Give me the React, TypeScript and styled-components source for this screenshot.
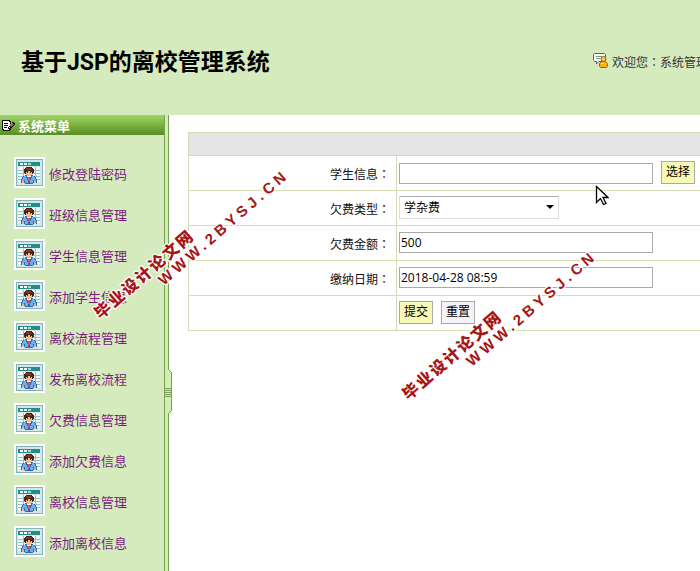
import React from "react";
import styled, { createGlobalStyle } from "styled-components";

const GlobalStyle = createGlobalStyle`
  * { box-sizing: border-box; }
  body {
    margin: 0;
    background: #fff;
    color: #111;
    font: 12px/16px "Open Sans", "Noto Sans CJK SC", sans-serif;
    overflow: hidden;
  }
`;

const Page = styled.div`
  position: relative;
  display: flex;
  flex-direction: column;
  min-height: 100vh;
  overflow: hidden;
`;

const Header = styled.header`
  display: flex;
  align-items: center;
  justify-content: space-between;
  height: 115px;
  padding-left: 21px;
  padding-top: 10px;
  background: #d5ebbd;
  white-space: nowrap;
`;

const Title = styled.h1`
  margin: 0;
  color: #000;
  font: bold 23px/32px Roboto, "Noto Sans CJK SC", sans-serif;
`;

const Welcome = styled.div`
  display: flex;
  align-items: center;
  gap: 4px;
  width: 107px;
  color: #333;
  svg { flex: none; margin-bottom: 4px; }
`;

const Body = styled.div`
  display: flex;
  flex: 1;
`;

const Sidebar = styled.aside`
  flex: none;
  width: 164px;
  background: #d5ebbd;
`;

const MenuTitle = styled.h2`
  display: flex;
  align-items: center;
  gap: 3px;
  height: 20px;
  margin: 0;
  padding-left: 2px;
  background: linear-gradient(#a3d567, #7db544 45%, #5a8d26);
  color: #fff;
  font: bold 13px/20px "Noto Sans CJK SC", sans-serif;
  span { padding-top: 1px; }
`;

const Menu = styled.ul`
  display: flex;
  flex-direction: column;
  gap: 10px;
  margin: 0;
  padding: 22px 0 0 14px;
  list-style: none;
`;

const MenuLink = styled.a`
  display: flex;
  align-items: center;
  gap: 4px;
  height: 31px;
  color: #7b1b7d;
  font: 13px/18px "Noto Sans CJK SC", sans-serif;
  text-decoration: none;
  white-space: nowrap;
  svg { flex: none; }
  span { padding-top: 3px; }
`;

const Splitter = styled.div`
  position: relative;
  flex: none;
  width: 5px;
  border: solid #7a9f58;
  border-width: 0 1px;
  background: #d1f0b0;
`;

const Handle = styled.button`
  position: absolute;
  top: 254px;
  left: 0;
  width: 8px;
  height: 46px;
  padding: 0;
  border: 0;
  background: none;
  svg { display: block; }
`;

const Content = styled.main`
  flex: 1;
  min-width: 0;
  padding: 17px 0 0 19px;
`;

const FormTable = styled.table`
  width: 100%;
  table-layout: fixed;
  border-collapse: collapse;
  border: 1px solid #d5dcb4;
  border-right: 0;
  tr { height: 35px; }
  th, td { padding: 0; border-bottom: 1px solid #d5dcb4; }
`;

const Caption = styled.th`
  height: 23px;
  background: #e5e5e5;
`;

const CaptionRow = styled.tr`
  && { height: 23px; }
`;

const LabelCell = styled.th`
  && { padding: 2px 6px 0 0; border-right: 1px solid #d5dcb4; }
  text-align: right;
  font-weight: normal;
`;

const Colon = styled.span`
  font-family: "Noto Sans CJK TC", sans-serif;
`;

const Fields = styled.div`
  display: flex;
  align-items: flex-end;
  gap: 8px;
  padding: 0 0 2px 2px;
`;

const TextInput = styled.input`
  width: 254px;
  height: 21px;
  padding: 0 1px;
  border: 1px solid #a9a9a9;
  border-radius: 0;
  background: #fff;
  color: #000;
  font: inherit;
`;

const SelectWrap = styled.div`
  display: grid;
  align-items: center;
  width: 160px;
  svg { grid-area: 1 / 1; justify-self: end; margin-right: 5px; pointer-events: none; }
`;

const Select = styled.select`
  grid-area: 1 / 1;
  width: 100%;
  height: 23px;
  padding: 2px 4px 0;
  appearance: none;
  border: 1px solid #dedee2;
  border-top-color: #abadb3;
  border-radius: 1px;
  background: #fff;
  color: #000;
  font: inherit;
`;

const Button = styled.button<{ $plain?: boolean }>`
  width: 34px;
  height: 23px;
  padding: 0;
  border: 1px solid #a9a9a9;
  background: ${(p) => (p.$plain ? "#f7f1fa" : "#f7f9b4")};
  color: #000;
  font: inherit;
  white-space: nowrap;
`;

const Watermark = styled.div<{ $x: number; $y: number }>`
  position: absolute;
  left: ${(p) => p.$x}px;
  top: ${(p) => p.$y}px;
  display: flex;
  flex-direction: column;
  width: 220px;
  transform: rotate(-41deg);
  transform-origin: 0 0;
  color: #a81515;
  font: bold 16px/16px "Liberation Sans", "Noto Sans CJK SC", sans-serif;
  white-space: nowrap;
  pointer-events: none;
  text-shadow: 1px 0 #fff, -1px 0 #fff, 0 1px #fff, 0 -1px #fff, 1px 1px #fff, -1px -1px #fff, 1px -1px #fff, -1px 1px #fff, 0 0 2px #fff;
`;

const MarkName = styled.span`
  font-weight: 900;
  letter-spacing: 2px;
`;

const MarkSite = styled.span`
  padding-left: 70px;
  font-size: 15px;
  letter-spacing: 4px;
`;

const Pointer = styled.svg`
  position: absolute;
  left: 595px;
  top: 185px;
`;

const UserIcon = () => (
  <svg width="31" height="31" viewBox="0 0 31 31" shapeRendering="crispEdges" aria-hidden="true">
    <path fill="#fff" d="M0 0h31v31H0z" />
    <path fill="#86b4b6" d="M2 2h27v27H2z" />
    <path fill="#d3e8e8" d="M3 3h25v25H3z" />
    <path fill="#268b8b" d="M4 5h22v4H4z" />
    <path fill="#fff" d="M6 6h3v2H6zM10 6h3v2h-3z" />
    <path fill="#a8dcdc" d="M14 6h3v2h-3z" />
    <path fill="#f2fbfb" d="M4 10h22v15H4z" />
    <path fill="#9dc0c2" d="M4 13h22v1H4zM4 16h22v1H4zM4 19h22v1H4zM4 22h22v1H4zM9 10h1v15H9zM21 10h1v15h-1z" />
    <path fill="#4b2419" d="M12 10h6v1h1v1h1v4h-1v1h-8v-1h-1v-4h1v-1h1z" />
    <path fill="#7a3b1c" d="M12 11h5v1h1v1h-6z" />
    <path fill="#f3bf8c" d="M12 15h2v-1h2v1h2v3h-1v1h-4v-1h-1z" />
    <path fill="#5b3527" d="M13 15h1v1h-1zM16 15h1v1h-1z" />
    <path fill="#2f66ac" d="M11 18h2v1h4v-1h2v1h2v1h1v2h1v4h-4v1h-8v-1H7v-4h1v-2h1v-1h2z" />
    <path fill="#6bb0f2" d="M10 19h2v2h1v2h1v3h-3v-3h-1v2H8v-3h1v-2h1zM18 19h2v1h1v2h1v3h-2v-2h-1v3h-3v-3h1v-2h1z" />
    <path fill="#fff" d="M13 19h4v1h-1v2h-2v-2h-1z" />
    <path fill="#df5546" d="M14 20h2v4h-2z" />
    <path fill="#f6b777" d="M8 24h2v2H8zM20 24h2v2h-2z" />
  </svg>
);

const EditIcon = () => (
  <svg width="13" height="13" viewBox="0 0 13 13" shapeRendering="crispEdges" aria-hidden="true">
    <path fill="#111" d="M0 1h8v1h1v3H8v3h1v3H8v1H1v-1H0z" />
    <path fill="#fff" d="M1 2h6v1h1v7H7v1H2v-1H1z" />
    <path fill="#111" d="M2 4h4v1H2zM2 6h4v1H2zM2 8h3v1H2z" />
    <path fill="#111" d="M10 3h2v1h1v2h-1v1h-1v1h-1v1H9v1H6V8h1V7h1V6h1V5h1z" />
    <path fill="#bd5534" d="M10 4h1v1h1v1h-1v1h-1v1H9V7H8V6h1V5h1z" />
    <path fill="#f4d699" d="M7 8h1v1H7z" />
  </svg>
);

const ChatIcon = () => (
  <svg width="15" height="15" viewBox="0 0 15 15" fill="none" aria-hidden="true">
    <path fill="#f8faf7" stroke="#5d6561" d="M1.500.5h10l1 1v6l-1 1H6L3.500 11V8.500h-2l-1-1v-6z" />
    <path stroke="#8b918d" d="M3 3.500h6M3 5.500h4" />
    <circle cx="10.500" cy="6" r="2.500" fill="#f7c84a" stroke="#9c6500" />
    <path fill="#f6ae19" stroke="#a76600" d="M6.500 13.500v-3l2-2h4l2 2v3l-1 1h-6z" />
    <path stroke="#ffe27a" d="M8 10.500h3" />
  </svg>
);

const menu = [
  "修改登陆密码",
  "班级信息管理",
  "学生信息管理",
  "添加学生信息",
  "离校流程管理",
  "发布离校流程",
  "欠费信息管理",
  "添加欠费信息",
  "离校信息管理",
  "添加离校信息",
];

const Mark = ({ x, y }: { x: number; y: number }) => (
  <Watermark $x={x} $y={y}>
    <MarkName>毕业设计论文网</MarkName>
    <MarkSite>WWW.2BYSJ.CN</MarkSite>
  </Watermark>
);

const FieldLabel = ({ id, text }: { id: string; text: string }) => (
  <LabelCell scope="row">
    <label htmlFor={id}>{text}<Colon>：</Colon></label>
  </LabelCell>
);

export default function App() {
  return (
    <Page>
      <GlobalStyle />
      <Header>
        <Title>基于JSP的离校管理系统</Title>
        <Welcome>
          <ChatIcon />
          <span>欢迎您<Colon>：</Colon>系统管理</span>
        </Welcome>
      </Header>
      <Body>
        <Sidebar>
          <MenuTitle>
            <EditIcon />
            <span>系统菜单</span>
          </MenuTitle>
          <Menu>
            {menu.map((label) => (
              <li key={label}>
                <MenuLink href="#">
                  <UserIcon />
                  <span>{label}</span>
                </MenuLink>
              </li>
            ))}
          </Menu>
        </Sidebar>
        <Splitter>
          <Handle type="button" aria-label="折叠菜单">
            <svg width="8" height="46" viewBox="0 0 8 46" shapeRendering="crispEdges">
              <path fill="#d1f0b0" d="M0 0h3v1h1v1h2v42H4v1H3v1H0z" />
              <path fill="#7a9f58" d="M3 0h1v1H3zM4 1h1v1H4zM5 2h1v1H5zM6 3h1v39H6zM5 42h1v1H5zM4 43h1v1H4zM3 44h1v2H3zM0 19h6v1H0zM0 21h6v1H0zM0 23h6v1H0zM0 25h6v1H0zM0 27h6v1H0z" />
            </svg>
          </Handle>
        </Splitter>
        <Content>
          <form onSubmit={(e) => e.preventDefault()}>
            <FormTable>
              <colgroup>
                <col width="208" />
                <col />
              </colgroup>
              <tbody>
                <CaptionRow>
                  <Caption colSpan={2} />
                </CaptionRow>
                <tr>
                  <FieldLabel id="student" text="学生信息" />
                  <td>
                    <Fields>
                      <TextInput id="student" />
                      <Button type="button">选择</Button>
                    </Fields>
                  </td>
                </tr>
                <tr>
                  <FieldLabel id="kind" text="欠费类型" />
                  <td>
                    <Fields>
                      <SelectWrap>
                        <Select id="kind"><option>学杂费</option></Select>
                        <svg width="8" height="4" viewBox="0 0 8 4" aria-hidden="true"><path d="M0 0h8L4 4z" /></svg>
                      </SelectWrap>
                    </Fields>
                  </td>
                </tr>
                <tr>
                  <FieldLabel id="amount" text="欠费金额" />
                  <td><Fields><TextInput id="amount" defaultValue="500" /></Fields></td>
                </tr>
                <tr>
                  <FieldLabel id="date" text="缴纳日期" />
                  <td><Fields><TextInput id="date" defaultValue="2018-04-28 08:59" /></Fields></td>
                </tr>
                <tr>
                  <LabelCell />
                  <td>
                    <Fields>
                      <Button type="submit">提交</Button>
                      <Button type="reset" $plain>重置</Button>
                    </Fields>
                  </td>
                </tr>
              </tbody>
            </FormTable>
          </form>
        </Content>
      </Body>
      <Mark x={92} y={310} />
      <Mark x={400} y={391} />
      <Pointer width="14" height="22" viewBox="0 0 14 22" aria-hidden="true">
        <path fill="#fff" stroke="#000" strokeWidth="1.300" d="M1.500 1.500v16l4-4 3 6 2.500-1-3-6h5z" />
      </Pointer>
    </Page>
  );
}
